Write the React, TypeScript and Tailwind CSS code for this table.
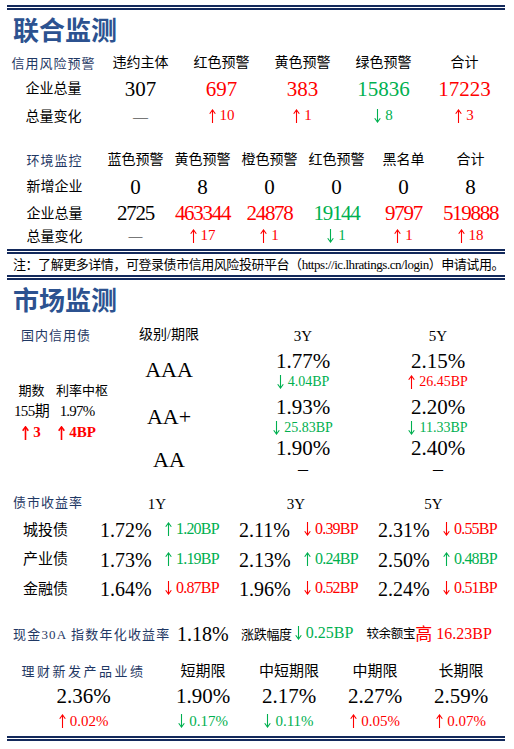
import React from 'react';

const RED = 'text-[#ff0000]';
const GREEN = 'text-[#00b050]';
const NAVY = 'text-[#1f3864]';

function Arrow({ up, thick }: { up: boolean; thick?: boolean }) {
  return (
    <svg width="7" height="14" viewBox="0 0 7 14" fill="none" stroke="currentColor" strokeWidth={thick ? 1.6 : 1.1} className="shrink-0">
      {up ? (
        <>
          <path d="M3.5 1.2V14" />
          <path d="M0.7 4.8L3.5 0.9L6.3 4.8" />
        </>
      ) : (
        <>
          <path d="M3.5 0V12.8" />
          <path d="M0.7 9.2L3.5 13.1L6.3 9.2" />
        </>
      )}
    </svg>
  );
}

function Chg({ up, v, color, size = 'text-[15px]', thick }: { up: boolean; v: string; color: string; size?: string; thick?: boolean }) {
  return (
    <span className={`inline-flex items-center gap-[4px] whitespace-nowrap leading-none ${color} ${size}`}>
      <Arrow up={up} thick={thick} />
      {v}
    </span>
  );
}

function DoubleLine() {
  return (
    <div className="ml-[7px] w-[498px]">
      <div className="h-[2px] bg-[#13295b]" />
      <div className="h-[1px]" />
      <div className="h-[2px] bg-[#13295b]" />
    </div>
  );
}

function Title({ text, h }: { text: string; h: string }) {
  return (
    <div className={`flex items-center pl-[13px] ${h}`}>
      <span className="text-[26px] font-bold leading-none text-[#2c5290] font-['Noto_Sans_CJK_SC',sans-serif]">{text}</span>
    </div>
  );
}

const t1Head = ['违约主体', '红色预警', '黄色预警', '绿色预警', '合计'];
const t1Total = [
  { v: '307', c: 'text-black' },
  { v: '697', c: RED },
  { v: '383', c: RED },
  { v: '15836', c: GREEN },
  { v: '17223', c: RED },
];
const t1Chg = [
  { up: true, v: '10', c: RED },
  { up: true, v: '1', c: RED },
  { up: false, v: '8', c: GREEN },
  { up: true, v: '3', c: RED },
];

const t2Head = ['蓝色预警', '黄色预警', '橙色预警', '红色预警', '黑名单', '合计'];
const t2New = ['0', '8', '0', '0', '0', '8'];
const t2Total = [
  { v: '2725', c: 'text-black' },
  { v: '463344', c: RED },
  { v: '24878', c: RED },
  { v: '19144', c: GREEN },
  { v: '9797', c: RED },
  { v: '519888', c: RED },
];
const t2Chg = [
  { up: true, v: '17', c: RED },
  { up: true, v: '1', c: RED },
  { up: false, v: '1', c: GREEN },
  { up: true, v: '1', c: RED },
  { up: true, v: '18', c: RED },
];

const ratings = [
  { r: 'AAA', pad: 'pb-[6px]', y3: '1.77%', c3: { up: false, v: '4.04BP', c: GREEN }, y5: '2.15%', c5: { up: true, v: '26.45BP', c: RED } },
  { r: 'AA+', pad: '', y3: '1.93%', c3: { up: false, v: '25.83BP', c: GREEN }, y5: '2.20%', c5: { up: false, v: '11.33BP', c: GREEN } },
  { r: 'AA', pad: 'pt-[2px]', y3: '1.90%', c3: null, y5: '2.40%', c5: null },
];

const bonds = [
  { name: '城投债', vals: [['1.72%', true, '1.20BP'], ['2.11%', false, '0.39BP'], ['2.31%', false, '0.55BP']] },
  { name: '产业债', vals: [['1.73%', true, '1.19BP'], ['2.13%', true, '0.24BP'], ['2.50%', true, '0.48BP']] },
  { name: '金融债', vals: [['1.64%', false, '0.87BP'], ['1.96%', false, '0.52BP'], ['2.24%', false, '0.51BP']] },
] as const;

const wealth = [
  { h: '短期限', v: '1.90%', up: false, d: '0.17%' },
  { h: '中短期限', v: '2.17%', up: false, d: '0.11%' },
  { h: '中期限', v: '2.27%', up: true, d: '0.05%' },
  { h: '长期限', v: '2.59%', up: true, d: '0.07%' },
];

export default function App() {
  return (
    <div className="w-[514px] h-[749px] bg-white pt-[5px] text-black font-['Liberation_Serif','Noto_Sans_CJK_SC',serif] overflow-hidden">
      <DoubleLine />
      <Title text="联合监测" h="h-[41px] pb-[4px]" />

      {/* 信用风险预警 */}
      <div className="ml-[7px] grid grid-cols-[93px_repeat(5,81px)] grid-rows-[24px_28px_28px] items-center text-center leading-none">
        <div className={`text-[13px] tracking-[1px] ${NAVY}`}>信用风险预警</div>
        {t1Head.map((h) => (
          <div key={h} className="text-[14px]">{h}</div>
        ))}
        <div className="text-[14px]">企业总量</div>
        {t1Total.map((x) => (
          <div key={x.v} className={`text-[21px] ${x.c}`}>{x.v}</div>
        ))}
        <div className="text-[14px]">总量变化</div>
        <div className="text-[15px]">—</div>
        {t1Chg.map((x, i) => (
          <div key={i}><Chg up={x.up} v={x.v} color={x.c} /></div>
        ))}
      </div>

      {/* 环境监控 */}
      <div className="ml-[7px] mt-[17px] grid grid-cols-[95px_repeat(6,67px)] grid-rows-[24px_30px_23px_24px] items-center text-center leading-none">
        <div className={`text-[13px] tracking-[1px] ${NAVY}`}>环境监控</div>
        {t2Head.map((h) => (
          <div key={h} className="text-[14px] whitespace-nowrap">{h}</div>
        ))}
        <div className="text-[14px]">新增企业</div>
        {t2New.map((v, i) => (
          <div key={i} className="text-[21px]">{v}</div>
        ))}
        <div className="text-[14px]">企业总量</div>
        {t2Total.map((x) => (
          <div key={x.v} className={`text-[21px] tracking-[-1.3px] ${x.c}`}>{x.v}</div>
        ))}
        <div className="text-[14px]">总量变化</div>
        <div className="text-[14px]">—</div>
        {t2Chg.map((x, i) => (
          <div key={i}><Chg up={x.up} v={x.v} color={x.c} /></div>
        ))}
      </div>

      <DoubleLine />
      <div className="h-[21px] flex items-center pl-[13px] text-[13px] tracking-[-0.45px] whitespace-nowrap leading-none">
        注：了解更多详情，可登录债市信用风险投研平台（https://ic.lhratings.cn/login）申请试用。
      </div>
      <DoubleLine />
      <Title text="市场监测" h="h-[40px] pb-[3px]" />

      {/* 国内信用债 */}
      <div className="ml-[7px] grid grid-cols-[98px_128px_140px_130px] grid-rows-[30px_46px_41px_43px] leading-none text-center">
        <div className={`self-center text-[13px] tracking-[1px] ${NAVY}`}>国内信用债</div>
        <div className="self-center text-[14px]">级别/期限</div>
        <div className="self-center text-[15px] pt-[2px]">3Y</div>
        <div className="self-center text-[15px] pt-[2px]">5Y</div>

        <div className="row-span-3 grid grid-cols-[49px_42px] grid-rows-[20px_22px_24px] pt-[30px] items-center">
          <div className="text-[13px]">期数</div>
          <div className="text-[13px] whitespace-nowrap">利率中枢</div>
          <div className="text-[15px] tracking-[-0.6px] whitespace-nowrap">155期</div>
          <div className="text-[15px] tracking-[-0.8px]">1.97%</div>
          <div><Chg up v="3" color={RED} size="text-[15px] font-bold" thick /></div>
          <div><Chg up v="4BP" color={RED} size="text-[15px] font-bold" thick /></div>
        </div>

        {ratings.map((r) => (
          <React.Fragment key={r.r}>
            <div className={`self-center text-[22px] ${r.pad}`}>{r.r}</div>
            {[{ y: r.y3, c: r.c3 }, { y: r.y5, c: r.c5 }].map((cell, i) => (
              <div key={i} className="flex flex-col items-center">
                <div className="h-[22px] flex items-center text-[21px]">{cell.y}</div>
                <div className="h-[19px] flex items-center">
                  {cell.c ? <Chg up={cell.c.up} v={cell.c.v} color={cell.c.c} size="text-[14px]" /> : <span className="text-[20px]">–</span>}
                </div>
              </div>
            ))}
          </React.Fragment>
        ))}
      </div>

      {/* 债市收益率 */}
      <div className="ml-[7px] mt-[10px] grid grid-cols-[93px_65px_74px_65px_74px_65px_71px] grid-rows-[25px_30px_29px_30px] items-center leading-none">
        <div className={`pl-[6px] text-[13px] tracking-[1px] ${NAVY}`}>债市收益率</div>
        {['1Y', '3Y', '5Y'].map((y) => (
          <div key={y} className="col-span-2 text-center pr-[25px] text-[15px] pt-[3px]">{y}</div>
        ))}
        {bonds.map((b) => (
          <React.Fragment key={b.name}>
            <div className="pl-[16px] text-[15px]">{b.name}</div>
            {b.vals.map(([v, up, d], i) => (
              <React.Fragment key={i}>
                <div className="text-[20px]">{v}</div>
                <div><Chg up={up} v={d} color={up ? GREEN : RED} size="text-[16px] tracking-[-0.8px]" /></div>
              </React.Fragment>
            ))}
          </React.Fragment>
        ))}
      </div>

      {/* 现金30A */}
      <div className="mt-[15px] h-[30px] flex items-center pl-[13px] leading-none whitespace-nowrap">
        <span className={`w-[164px] text-[13px] tracking-[1.2px] ${NAVY}`}>现金30A 指数年化收益率</span>
        <span className="w-[64px] text-[20px]">1.18%</span>
        <span className="text-[13px] tracking-[-0.3px]">涨跌幅度</span>
        <span className="ml-[3px]"><Chg up={false} v="0.25BP" color={GREEN} size="text-[16px]" /></span>
        <span className="ml-[13px] text-[12.5px] tracking-[-0.3px]">较余额宝</span>
        <span className={`text-[17px] ${RED}`}>高</span>
        <span className={`ml-[4px] text-[16px] ${RED}`}>16.23BP</span>
      </div>

      {/* 理财新发产品业绩 */}
      <div className="ml-[7px] mt-[10px] grid grid-cols-[153px_repeat(4,86px)] grid-rows-[24px_27px_25px] items-center text-center leading-none">
        <div className={`text-[13px] tracking-[2.5px] whitespace-nowrap ${NAVY}`}>理财新发产品业绩</div>
        {wealth.map((w) => (
          <div key={w.h} className="text-[15px]">{w.h}</div>
        ))}
        <div className="text-[21px]">2.36%</div>
        {wealth.map((w) => (
          <div key={w.h} className="text-[21px]">{w.v}</div>
        ))}
        <div><Chg up v="0.02%" color={RED} /></div>
        {wealth.map((w) => (
          <div key={w.h}><Chg up={w.up} v={w.d} color={w.up ? RED : GREEN} /></div>
        ))}
      </div>

      <div className="mt-[1px]">
        <DoubleLine />
      </div>
    </div>
  );
}
